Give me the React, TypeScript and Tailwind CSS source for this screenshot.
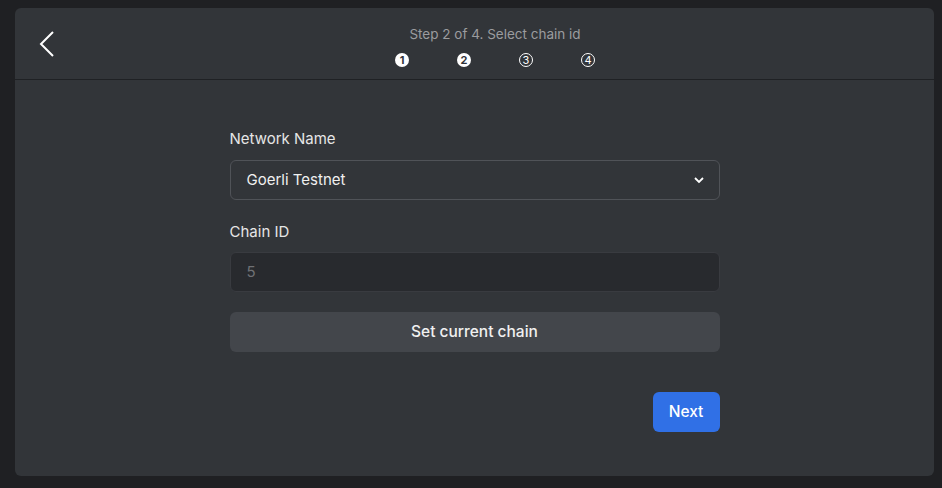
import React from "react";

function Step({ n, filled }: { n: number; filled: boolean }) {
  return filled ? (
    <div className="w-[14px] h-[14px] rounded-full bg-white text-[#323439] text-[11px] font-bold flex items-center justify-center leading-none">
      {n}
    </div>
  ) : (
    <div className="w-[14px] h-[14px] rounded-full border border-white text-white text-[11px] flex items-center justify-center leading-none">
      {n}
    </div>
  );
}

export default function App() {
  return (
    <div
      className="w-[942px] h-[488px] bg-[#1f2023] pt-[8px] pl-[15px] pr-[8px] pb-[12px] flex"
      style={{ fontFamily: "Inter, 'Noto Sans', sans-serif" }}
    >
      <div className="flex-1 flex flex-col bg-[#323539] rounded-[6px] overflow-hidden">
        <div className="h-[72px] border-b border-[#1f2124] flex items-stretch px-[22px]">
          <div className="w-[41px] flex items-center">
            <svg width="18" height="28" viewBox="0 0 18 28" className="ml-[1px]">
              <path d="M15 2 L3 14 L15 26" fill="none" stroke="white" strokeWidth="2" />
            </svg>
          </div>
          <div className="flex-1 flex flex-col items-center pt-[18px]">
            <div className="text-[13.5px] text-[#9b9c9f] leading-[16px]">Step 2 of 4. Select chain id</div>
            <div className="flex gap-[48px] mt-[11px]">
              <Step n={1} filled />
              <Step n={2} filled />
              <Step n={3} filled={false} />
              <Step n={4} filled={false} />
            </div>
          </div>
        </div>
        <div className="flex justify-center">
          <div className="w-[490px] flex flex-col pt-[49px]">
            <div className="text-[15px] text-[#e6e6e6] leading-[20px]">Network Name</div>
            <div className="mt-[11px] h-[40px] rounded-[6px] border border-[#505358] flex items-center justify-between pl-[16px] pr-[13px] text-[15px] text-[#f0f0f0]">
              <span>Goerli Testnet</span>
              <svg width="14" height="14" viewBox="0 0 14 14">
                <path d="M3 5 L7 9 L11 5" fill="none" stroke="white" strokeWidth="1.8" />
              </svg>
            </div>
            <div className="mt-[22px] text-[15px] text-[#e6e6e6] leading-[20px]">Chain ID</div>
            <div className="mt-[10px] h-[40px] rounded-[6px] border border-[#393b40] bg-[#282a2e] flex items-center pl-[16px] text-[15px] text-[#6f7175]">
              5
            </div>
            <div className="mt-[20px] h-[40px] rounded-[6px] bg-[#43464b] flex items-center justify-center text-[15.5px] font-medium text-[#f0f0f0]">
              Set current chain
            </div>
            <div className="flex justify-end mt-[40px]">
              <div className="w-[67px] h-[40px] rounded-[6px] bg-[#3070e6] flex items-center justify-center text-[15.5px] font-medium text-white">
                Next
              </div>
            </div>
          </div>
        </div>
      </div>
    </div>
  );
}
